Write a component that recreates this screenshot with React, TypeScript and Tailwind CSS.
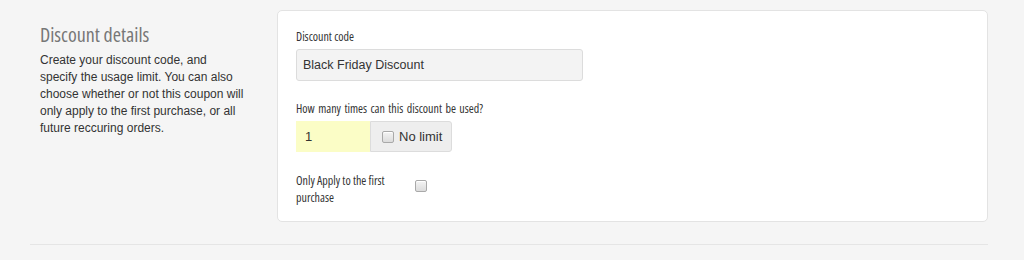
import { useState } from "react";

const arial = "font-['Liberation_Sans',Arial,sans-serif]";
const narrow = "font-['Open_Sans',sans-serif] [font-stretch:condensed]";

const Checkbox = ({ checked, onChange }: { checked: boolean; onChange: () => void }) => (
  <input
    type="checkbox"
    checked={checked}
    onChange={onChange}
    className="m-0 h-[12px] w-[12px] shrink-0 appearance-none rounded-[2px] border border-[#a9a9a9] bg-gradient-to-b from-[#f4f4f4] to-[#dcdcdc] shadow-[inset_0_1px_0_#fff] checked:bg-[#4a90d9]"
  />
);

export default function App() {
  const [noLimit, setNoLimit] = useState(false);
  const [firstOnly, setFirstOnly] = useState(false);

  return (
    <div className="min-h-[260px] bg-[#f5f5f5] px-[30px] pt-[10px]">
      <div className="flex w-[958px]">
        <div className="w-[247px] shrink-0 pl-[10px] pt-[12px]">
          <h2 className={`${narrow} text-[20px] leading-[26px] text-[#777]`}>Discount details</h2>
          <p className={`${arial} mt-[4px] w-[204px] text-[12px] leading-[17px] text-[#333]`}>
            Create your discount code, and specify the usage limit. You can also choose whether or not this
            coupon will only apply to the first purchase, or all future reccuring orders.
          </p>
        </div>

        <div className="h-[212px] w-[711px] rounded-[5px] border border-[#e3e3e3] bg-white px-[18px] pt-[18px]">
          <label className={`${narrow} block text-[12px] leading-[16px] text-[#333]`}>Discount code</label>
          <input
            defaultValue="Black Friday Discount"
            className={`${arial} mt-[4px] block h-[32px] w-[287px] rounded-[3px] border border-[#dcdcdc] bg-[#f3f3f3] px-[6px] text-[12.5px] text-[#333] outline-none`}
          />

          <label className={`${narrow} mt-[20px] block text-[12px] leading-[16px] text-[#333] [word-spacing:1.2px]`}>
            How many times can this discount be used?
          </label>
          <div className="mt-[4px] flex h-[31px]">
            <input
              defaultValue="1"
              className={`${arial} w-[74px] border-0 bg-[#fbfdc6] px-[9px] text-[13px] text-[#333] outline-none`}
            />
            <label className={`${arial} flex w-[82px] items-center gap-[5px] rounded-r-[3px] border border-[#dcdcdc] bg-[#eee] pl-[11px] text-[13px] text-[#333]`}>
              <Checkbox checked={noLimit} onChange={() => setNoLimit(!noLimit)} />
              No limit
            </label>
          </div>

          <div className="mt-[20px] flex items-start">
            <span className={`${narrow} w-[119px] text-[12px] leading-[17px] text-[#333]`}>
              Only Apply to the first purchase
            </span>
            <div className="pt-[2px]">
              <Checkbox checked={firstOnly} onChange={() => setFirstOnly(!firstOnly)} />
            </div>
          </div>
        </div>
      </div>
      <div className="mt-[22px] h-px w-[958px] bg-[#e5e5e5]" />
    </div>
  );
}
